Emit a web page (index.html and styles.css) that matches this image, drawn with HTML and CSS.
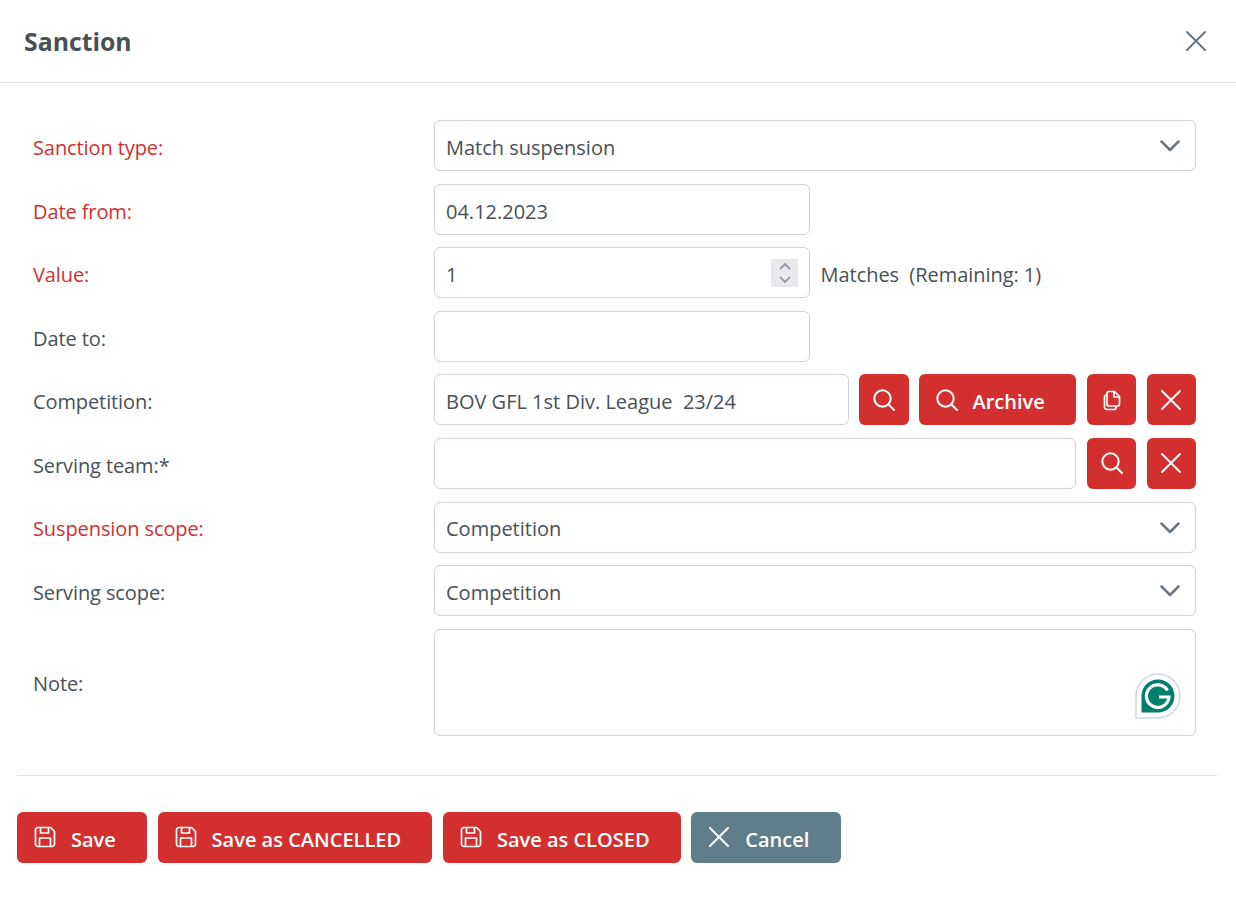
FILE: index.html
```html
<!DOCTYPE html>
<html lang="en">
<head>
<meta charset="utf-8">
<title>Sanction</title>
<link rel="stylesheet" href="styles.css">
</head>
<body>
<svg class="sprites" width="0" height="0" aria-hidden="true">
  <symbol id="i-x" viewBox="0 0 24 24"><path d="M3 3 21 21M21 3 3 21" fill="none" stroke="currentColor" stroke-width="2" stroke-linecap="round"/></symbol>
  <symbol id="i-search" viewBox="0 0 24 24"><circle cx="10.5" cy="10.5" r="8.2" fill="none" stroke="currentColor" stroke-width="2"/><path d="M16.5 16.5 22 22" fill="none" stroke="currentColor" stroke-width="2" stroke-linecap="round"/></symbol>
  <symbol id="i-save" viewBox="0 0 24 24"><path d="M5 2.5h12.5l4 4V19a2.5 2.5 0 0 1-2.5 2.5H5A2.5 2.5 0 0 1 2.500 19V5A2.500 2.500 0 0 1 5 2.500ZM7.500 2.500v5.500h8V2.500M6.500 21.500v-8.500h11v8.500" fill="none" stroke="currentColor" stroke-width="1.700" stroke-linejoin="round"/></symbol>
  <symbol id="i-copy" viewBox="0 0 24 24"><path d="M9 3.500h5.500l5 5V16a2 2 0 0 1-2 2H9a2 2 0 0 1-2-2V5.500a2 2 0 0 1 2-2ZM14 3.500v5.500h5.500M7 7H6.500a2 2 0 0 0-2 2v10a2.500 2.500 0 0 0 2.500 2.500h7a2 2 0 0 0 2-2V18" fill="none" stroke="currentColor" stroke-width="1.700" stroke-linejoin="round"/></symbol>
  <symbol id="i-chev" viewBox="0 0 20 12"><path d="M1.500 1.500 10 10l8.500-8.500" fill="none" stroke="currentColor" stroke-width="2.500" stroke-linecap="round" stroke-linejoin="round"/></symbol>
</svg>

<main class="dialog">
  <header class="dialog-head">
    <h1 class="dialog-title">Sanction</h1>
    <button class="close" type="button" aria-label="Close"><svg class="icon-close"><use href="#i-x"/></svg></button>
  </header>

  <form class="form">
    <div class="row">
      <label class="label required">Sanction type:</label>
      <div class="field select-wrap">
        <select class="control"><option>Match suspension</option></select>
        <svg class="chev"><use href="#i-chev"/></svg>
      </div>
    </div>
    <div class="row">
      <label class="label required">Date from:</label>
      <div class="field"><input class="control half" type="text" value="04.12.2023"></div>
    </div>
    <div class="row">
      <label class="label required">Value:</label>
      <div class="field inline">
        <div class="number-wrap">
          <input class="control half" type="text" value="1">
          <span class="spinner">
            <svg viewBox="0 0 12 8"><path d="M1.500 6.500 6 2l4.500 4.500" fill="none" stroke="currentColor" stroke-width="1.800" stroke-linecap="round" stroke-linejoin="round"/></svg>
            <svg viewBox="0 0 12 8"><path d="M1.500 1.500 6 6l4.500-4.500" fill="none" stroke="currentColor" stroke-width="1.800" stroke-linecap="round" stroke-linejoin="round"/></svg>
          </span>
        </div>
        <span class="suffix">Matches&nbsp; (Remaining: 1)</span>
      </div>
    </div>
    <div class="row">
      <label class="label">Date to:</label>
      <div class="field"><input class="control half" type="text"></div>
    </div>
    <div class="row">
      <label class="label">Competition:</label>
      <div class="field inline">
        <input class="control grow" type="text" value="BOV GFL 1st Div. League&nbsp; 23/24">
        <button class="btn icon-btn wide" type="button"><svg class="ic"><use href="#i-search"/></svg></button>
        <button class="btn archive" type="button"><svg class="ic"><use href="#i-search"/></svg><span>Archive</span></button>
        <button class="btn icon-btn" type="button"><svg class="ic"><use href="#i-copy"/></svg></button>
        <button class="btn icon-btn" type="button"><svg class="ic"><use href="#i-x"/></svg></button>
      </div>
    </div>
    <div class="row">
      <label class="label">Serving team:*</label>
      <div class="field inline">
        <input class="control grow" type="text">
        <button class="btn icon-btn" type="button"><svg class="ic"><use href="#i-search"/></svg></button>
        <button class="btn icon-btn" type="button"><svg class="ic"><use href="#i-x"/></svg></button>
      </div>
    </div>
    <div class="row">
      <label class="label required">Suspension scope:</label>
      <div class="field select-wrap">
        <select class="control"><option>Competition</option></select>
        <svg class="chev"><use href="#i-chev"/></svg>
      </div>
    </div>
    <div class="row">
      <label class="label">Serving scope:</label>
      <div class="field select-wrap">
        <select class="control"><option>Competition</option></select>
        <svg class="chev"><use href="#i-chev"/></svg>
      </div>
    </div>
    <div class="row">
      <label class="label">Note:</label>
      <div class="field note-wrap">
        <textarea class="control note"></textarea>
        <svg class="grammarly" viewBox="0 0 46 46" aria-hidden="true">
          <path d="M23 1a22 22 0 0 1 0 44H1V23A22 22 0 0 1 23 1Z" fill="#fff" stroke="#d3d6e0" stroke-width="1.500"/>
          <path d="M23 6.500a16.500 16.500 0 0 1 0 33H6.500V23A16.500 16.500 0 0 1 23 6.500Z" fill="#027e6f"/>
          <path d="M32.500 17.500A11.300 11.300 0 1 0 34 24H24" fill="none" stroke="#fff" stroke-width="3.200"/>
        </svg>
      </div>
    </div>
  </form>

  <footer class="actions">
    <button class="btn action" type="button"><svg class="ic"><use href="#i-save"/></svg><span>Save</span></button>
    <button class="btn action" type="button"><svg class="ic"><use href="#i-save"/></svg><span>Save as CANCELLED</span></button>
    <button class="btn action" type="button"><svg class="ic"><use href="#i-save"/></svg><span>Save as CLOSED</span></button>
    <button class="btn action cancel" type="button"><svg class="ic ic-cancel"><use href="#i-x"/></svg><span>Cancel</span></button>
  </footer>
</main>
</body>
</html>
```

FILE: styles.css
```css
* { box-sizing: border-box; }

html, body { margin: 0; background: #fff; }

body {
  font-family: "Open Sans", "Noto Sans", "Liberation Sans", sans-serif;
  font-size: 20px;
  color: #495057;
}

.sprites { display: block; height: 0; }

.dialog { width: 1236px; height: 898px; }

.dialog-head {
  height: 83px;
  padding: 0 28px 0 24px;
  display: flex;
  align-items: center;
  justify-content: space-between;
  border-bottom: 1px solid #dee2e6;
}

.dialog-title {
  margin: 0;
  font-size: 24.800px;
  font-weight: 700;
  color: #495057;
}

.close {
  display: flex;
  padding: 0;
  border: 0;
  background: none;
  color: #6c757d;
}

.icon-close { width: 24px; height: 24px; }

.form {
  padding: 37.250px 40px 0 33px;
  display: flex;
  flex-direction: column;
  gap: 12.550px;
}

.row {
  display: grid;
  grid-template-columns: 401px 762px;
  align-items: center;
}

.label {
  color: #495057;
  padding-top: 3.500px;
  letter-spacing: -0.100px;
}
.label.required { color: #d32f2f; }

.field { position: relative; }

.inline {
  display: flex;
  align-items: center;
  gap: 10.600px;
}

.control {
  display: block;
  width: 100%;
  height: 51px;
  padding: 3.500px 11px 0;
  border: 1px solid #ced4da;
  border-radius: 6px;
  background: #fff;
  color: #495057;
  font: inherit;
  outline: none;
}

select.control { appearance: none; }

.half { width: 376px; }
.grow { flex: 1 1 0; min-width: 0; }

.chev {
  position: absolute;
  right: 16px;
  top: 20px;
  width: 20px;
  height: 12px;
  color: #6c757d;
  pointer-events: none;
}

.number-wrap { position: relative; }

.spinner {
  position: absolute;
  left: 337px;
  top: 12px;
  width: 27px;
  height: 28px;
  padding: 3px 0;
  display: flex;
  flex-direction: column;
  align-items: center;
  justify-content: space-between;
  background: #e9e9ed;
  color: #9b9ba6;
}

.spinner svg { width: 12px; height: 8px; }

.suffix {
  white-space: nowrap;
  padding-top: 3.500px;
  letter-spacing: -0.050px;
}

.btn {
  display: inline-flex;
  align-items: center;
  height: 51px;
  flex: none;
  padding: 0;
  border: 0;
  border-radius: 6px;
  background: #d32f2f;
  color: #fff;
  font: inherit;
  font-weight: 600;
}

.btn span { padding-top: 4px; }

.ic { width: 24px; height: 24px; flex: none; }

.icon-btn { width: 49.200px; justify-content: center; }
.icon-btn.wide { width: 49.600px; }

.archive { width: 157px; padding-left: 16px; gap: 13px; }

.note { height: 107px; resize: none; padding-top: 10px; }

.grammarly {
  position: absolute;
  right: 15px;
  bottom: 17px;
  width: 46px;
  height: 46px;
}

.actions {
  margin: 39px 19px 0 17px;
  padding-top: 36.300px;
  border-top: 1px solid #dee2e6;
  display: flex;
  gap: 10.500px;
}

.action { padding: 0 31.300px 0 16px; gap: 14px; }

.cancel { background: #607d8b; }
```
